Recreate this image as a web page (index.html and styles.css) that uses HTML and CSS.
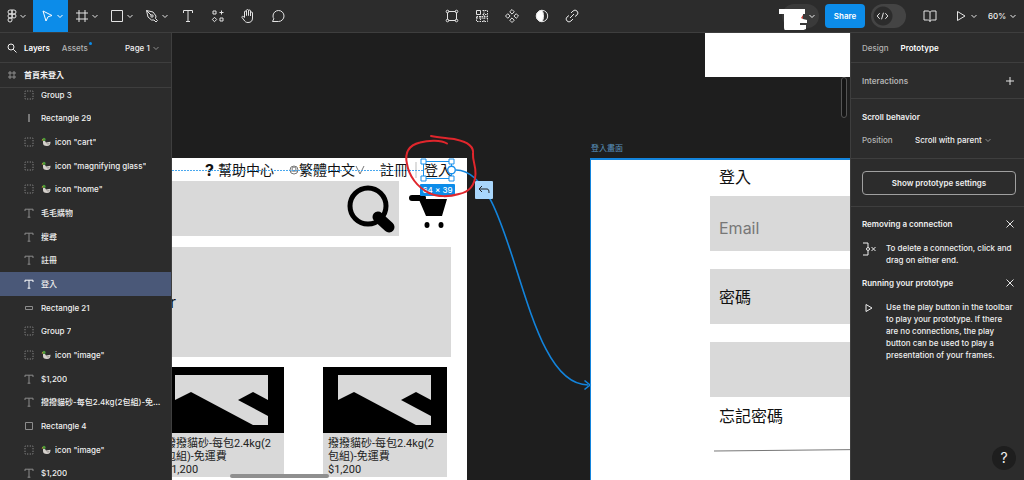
FILE: index.html
```
<!DOCTYPE html>
<html lang="zh-Hant">
<head>
<meta charset="utf-8">
<title>Design editor</title>
<link rel="stylesheet" href="styles.css">
</head>
<body>
<svg class="defs" aria-hidden="true">
  <symbol id="chev" viewBox="0 0 6 6"><path d="M.5 2L3 4.500 5.500 2"/></symbol>
  <symbol id="group" viewBox="0 0 10 10"><path d="M1 1h8v8H1z" stroke-dasharray="1.2 1.467" stroke-dashoffset=".6"/></symbol>
  <symbol id="text" viewBox="0 0 10 10"><path d="M1 3V1.2h8V3M5 1.2v8M3.6 9.2h2.8"/></symbol>
  <symbol id="hash" viewBox="0 0 10 10"><path d="M3 1v8M7 1v8M1 3h8M1 7h8"/></symbol>
  <symbol id="box" viewBox="0 0 10 10"><path d="M1.500 1.500h7v7h-7z"/></symbol>
  <symbol id="wide" viewBox="0 0 10 10"><path d="M1.500 3.500h7v3h-7z"/></symbol>
  <symbol id="bar" viewBox="0 0 10 10"><path d="M5 1v8" stroke-width="1.6"/></symbol>
  <symbol id="close" viewBox="0 0 10 10"><path d="M1.500 1.500l7 7M8.500 1.500l-7 7"/></symbol>
  <symbol id="duck" viewBox="0 0 10 10">
    <path d="M2 4h2l1 1.500 4.500-.7c0 3-1 4.200-3.500 4.200C3 9 2 8 2 6z" fill="#d5d1cc" stroke="none"/>
    <path d="M5 6.500l3.500-.6c0 1.300-1 1.700-2 1.700z" fill="#a29c98" stroke="none"/>
    <circle cx="3" cy="2.400" r="1.600" fill="#4c9a3a" stroke="none"/>
    <path d="M2 2L.4 3.200 2.200 3.500z" fill="#e0a33a" stroke="none"/>
  </symbol>
  <symbol id="picture" viewBox="0 0 124 66">
    <path d="M0 0h124v66H0z" fill="#000" stroke="none"/>
    <path d="M15 8h93v25l-15-8-15 8 30 16v9H93L31 25l-16 8z" fill="#d9d9d9" stroke="none"/>
  </symbol>
</svg>

<header class="toolbar">
  <div class="tools">
    <button class="tool menu" aria-label="Main menu"><svg class="i16" viewBox="0 0 16 16"><path d="M8 2H6a2 2 0 000 4h2zM8 2h2a2 2 0 010 4H8zM8 6H6a2 2 0 000 4h2zM8 10H6a2 2 0 102 2z"/><circle cx="10" cy="8" r="2"/></svg><svg class="chev"><use href="#chev"/></svg></button>
    <button class="tool wide active" aria-label="Move"><svg class="i16" viewBox="0 0 16 16"><path d="M4 3l9 4.500-4 1.300L7 13z"/></svg><svg class="chev"><use href="#chev"/></svg></button>
    <button class="tool wide" aria-label="Frame"><svg class="i16" viewBox="0 0 16 16"><path d="M5 2v12M11 2v12M2 5h12M2 11h12"/></svg><svg class="chev"><use href="#chev"/></svg></button>
    <button class="tool wide" aria-label="Rectangle"><svg class="i16" viewBox="0 0 16 16"><path d="M2.500 2.500h11v11h-11z"/></svg><svg class="chev"><use href="#chev"/></svg></button>
    <button class="tool wide" aria-label="Pen"><svg class="i16" viewBox="0 0 16 16"><path d="M2.500 2.500L9 4l3 4-.5 2.500 2 2-1.500 1.500-2-2L7.500 12 4 9zM2.500 2.500L7 7"/><circle cx="8" cy="8" r="1.200"/></svg><svg class="chev"><use href="#chev"/></svg></button>
    <button class="tool" aria-label="Text"><svg class="i16" viewBox="0 0 16 16"><path d="M3.500 5V2.500h9V5M8 2.500v11M6 13.500h4"/></svg></button>
    <button class="tool" aria-label="Resources"><svg class="i16" viewBox="0 0 16 16"><path d="M3 3h3v3H3zM11.500 2.500v4M9.500 4.500h4M4.500 9.300l2.200 2.200-2.200 2.200-2.200-2.200zM10 10h3v3h-3z"/></svg></button>
    <button class="tool" aria-label="Hand"><svg class="i16" viewBox="0 0 16 16"><path d="M4.500 9.500V4a1 1 0 012 0v3.500V2.500a1 1 0 012 0v5V3a1 1 0 012 0v5V5a1 1 0 012 0v5c0 3-1.500 4.500-4.500 4.500-2 0-3-.8-4-2.500L2 9.500c-.5-1 .8-1.700 1.500-.9z"/></svg></button>
    <button class="tool" aria-label="Comment"><svg class="i16" viewBox="0 0 16 16"><path d="M2.500 13.500h6a5.500 5.500 0 10-5.500-5.500c0 1 .3 2 .8 2.800z"/></svg></button>
  </div>
  <div class="tools">
    <button class="tool" aria-label="Edit object"><svg class="i16" viewBox="0 0 16 16"><path d="M3.500 4.500v7M12.500 4.500v7M4.500 3.500h7M4.500 12.500h7"/><circle cx="3.500" cy="3.500" r="1.300"/><circle cx="12.500" cy="3.500" r="1.300"/><circle cx="3.500" cy="12.500" r="1.300"/><circle cx="12.500" cy="12.500" r="1.300"/></svg></button>
    <button class="tool" aria-label="Tidy up"><svg class="i16" viewBox="0 0 16 16"><path d="M2.500 2.500h4v4h-4z"/><path d="M8.500 2.500h5v11h-11v-5M8.500 6.500h5M2.500 10h11M6.500 8v6M10 2v12M2.500 8.500h11" stroke-dasharray="1.500 1"/></svg></button>
    <button class="tool" aria-label="Create component"><svg class="i16" viewBox="0 0 16 16"><path d="M8 1.500l2.300 2.300L8 6.100 5.700 3.800zM8 9.900l2.300 2.300L8 14.500l-2.300-2.300zM3.800 5.700L6.100 8l-2.300 2.300L1.500 8zM12.200 5.700L14.500 8l-2.300 2.300L9.900 8z"/></svg></button>
    <button class="tool" aria-label="Mask"><svg class="i16" viewBox="0 0 16 16"><circle cx="8" cy="8" r="5.700"/><path d="M8 2.300a5.700 5.700 0 000 11.400c2-3 2-8.400 0-11.400z" fill="#fff"/></svg></button>
    <button class="tool" aria-label="Link"><svg class="i16" viewBox="0 0 16 16"><path d="M6 10l4-4M7 5l2-2a2.500 2.500 0 014 4l-2 1.500M9 11l-2 2a2.500 2.500 0 01-4-4l2-1.500"/></svg></button>
  </div>
  <div class="tools right">
    <button class="people" aria-label="Collaborators"><svg class="blot" viewBox="0 0 32 24"><path d="M1 3h26v5h-2v5l4 1v3h-7v2h6v4l-5 2H10c-4 0-4-2-4-5V8H1z" fill="#fff" stroke="none"/><path d="M23 12l2-3v4z" fill="#c8423a" stroke="none"/></svg><svg class="chev"><use href="#chev"/></svg></button>
    <button class="share">Share</button>
    <label class="toggle"><input type="checkbox" aria-label="Dev mode"><svg class="i16" viewBox="0 0 16 16"><path d="M5 5L2.300 8 5 11M11 5l2.700 3L11 11M9 4.500l-2 7"/></svg></label>
    <button class="tool book" aria-label="Library"><svg class="i16" viewBox="0 0 16 16"><path d="M8 4.500C7.500 3 6.500 3 5 3H2v9h3.500c1.500 0 2 .3 2.500 1.500.5-1.200 1-1.500 2.500-1.500H14V3h-3c-1.500 0-2.500 0-3 1.500zM8 4.500v9"/></svg></button>
    <button class="tool play" aria-label="Present"><svg class="i16" viewBox="0 0 16 16"><path d="M4.500 3.500L12 8l-7.500 4.500z"/></svg><svg class="chev"><use href="#chev"/></svg></button>
    <label class="pick"><select aria-label="Zoom"><option>60%</option></select><svg class="chev"><use href="#chev"/></svg></label>
  </div>
</header>

<main class="workspace">
  <aside class="layers">
    <div class="layers-head">
      <svg class="i10 bright" viewBox="0 0 10 10"><circle cx="4" cy="4" r="3"/><path d="M6.200 6.200L9.500 9.500"/></svg>
      <button class="tab on">Layers</button>
      <button class="tab assets">Assets</button>
      <label class="pick page"><select aria-label="Page"><option>Page 1</option></select><svg class="chev dim"><use href="#chev"/></svg></label>
    </div>
    <div class="layer-top"><svg class="i10"><use href="#hash"/></svg><span>首頁未登入</span></div>
    <ul class="list">
      <li><svg class="i10"><use href="#group"/></svg><span>Group 3</span></li>
      <li><svg class="i10"><use href="#bar"/></svg><span>Rectangle 29</span></li>
      <li><svg class="i10"><use href="#group"/></svg><svg class="duck"><use href="#duck"/></svg><span>icon "cart"</span></li>
      <li><svg class="i10"><use href="#group"/></svg><svg class="duck"><use href="#duck"/></svg><span>icon "magnifying glass"</span></li>
      <li><svg class="i10"><use href="#group"/></svg><svg class="duck"><use href="#duck"/></svg><span>icon "home"</span></li>
      <li><svg class="i10"><use href="#text"/></svg><span>毛毛購物</span></li>
      <li><svg class="i10"><use href="#text"/></svg><span>搜尋</span></li>
      <li><svg class="i10"><use href="#text"/></svg><span>註冊</span></li>
      <li class="selected"><svg class="i10"><use href="#text"/></svg><span>登入</span></li>
      <li><svg class="i10"><use href="#wide"/></svg><span>Rectangle 21</span></li>
      <li><svg class="i10"><use href="#group"/></svg><span>Group 7</span></li>
      <li><svg class="i10"><use href="#group"/></svg><svg class="duck"><use href="#duck"/></svg><span>icon "image"</span></li>
      <li><svg class="i10"><use href="#text"/></svg><span>$1,200</span></li>
      <li><svg class="i10"><use href="#text"/></svg><span>撥撥貓砂-每包2.4kg(2包組)-免運費</span></li>
      <li><svg class="i10"><use href="#box"/></svg><span>Rectangle 4</span></li>
      <li><svg class="i10"><use href="#group"/></svg><svg class="duck"><use href="#duck"/></svg><span>icon "image"</span></li>
      <li><svg class="i10"><use href="#text"/></svg><span>$1,200</span></li>
    </ul>
  </aside>

  <section class="canvas">
    <div class="frame blank"></div>

    <div class="frame home">
      <div class="home-nav">
        <b class="q">?</b><span>幫助中心</span>
        <span class="lang"><svg class="globe" viewBox="0 0 10 10"><circle cx="5" cy="5" r="4"/><circle cx="5" cy="4" r="2"/><path d="M1 6h8"/></svg>繁體中文<svg class="vee" viewBox="0 0 10 10"><path d="M1 1l4 8 4-8"/></svg></span>
        <span class="join">註冊</span><i class="rule"></i><span>登入</span>
      </div>
      <div class="home-search">
        <div class="field"><svg class="magnifier" viewBox="0 0 48 48"><path d="M31 32l11 10" stroke="#000" stroke-width="11" stroke-linecap="round"/><circle cx="21" cy="21" r="18" stroke="#000" stroke-width="5"/></svg></div>
        <svg class="cart" viewBox="0 0 38 40"><path d="M3 7h11" stroke="#000" stroke-width="6" stroke-linecap="round"/><path d="M8 4l4 1 1 3h25l-5 17H17z" fill="#000" stroke="none"/><ellipse cx="18" cy="34" rx="2.500" ry="3" fill="#000" stroke="none"/><ellipse cx="32" cy="34" rx="2.500" ry="3" fill="#000" stroke="none"/></svg>
      </div>
      <div class="banner">r</div>
      <div class="cards">
        <article class="card"><svg class="photo"><use href="#picture"/></svg><p>撥撥貓砂-每包2.4kg(2<br>包組)-免運費<br>$1,200</p></article>
        <article class="card"><svg class="photo"><use href="#picture"/></svg><p>撥撥貓砂-每包2.4kg(2<br>包組)-免運費<br>$1,200</p></article>
      </div>
    </div>

    <span class="frame-label">登入畫面</span>
    <div class="frame login">
      <div class="login-title">登入</div>
      <div class="login-box faint">Email</div>
      <div class="login-box">密碼</div>
      <div class="login-box"></div>
      <div class="forgot">忘記密碼</div>
      <svg class="slant" viewBox="0 0 200 4" preserveAspectRatio="none"><path d="M0 3L200 1"/></svg>
    </div>

    <svg class="overlay" viewBox="0 0 678 447">
      <g transform="translate(-172 -33)">
        <path d="M172 170.500H423" stroke="#4aa8ee" stroke-dasharray="2 1"/>
        <path d="M423.500 161.500h28v17h-28z" stroke="#1890ec"/>
        <path d="M456 170C516 170 520 385 588 385" stroke="#1384dc" stroke-width="1.600"/>
        <path d="M584.500 380.500l5.500 4.500-5.500 4.500" stroke="#1384dc" stroke-width="1.600"/>
        <g fill="#fff" stroke="#1890ec"><path d="M421 159h5v5h-5zM449 159h5v5h-5zM421 176h5v5h-5zM449 176h5v5h-5z"/><circle cx="451.500" cy="170" r="3.800" stroke-width="1.400"/></g>
      </g>
    </svg>
    <span class="size">64 × 39</span>
    <button class="back" aria-label="Back"><svg class="i12" viewBox="0 0 12 12"><path d="M4 2L1 5l3 3M1 5h8c1.500 0 2 1 2 4"/></svg></button>
    <svg class="overlay" viewBox="0 0 678 447">
      <path transform="translate(-172 -33)" d="M431 136C440 138 449 138 456 139.500C468 142 474 147 473 154C472.500 161 476 166 475.500 174C475 185 469 192 459 194C449 197 437 197 429 193C417 187 409 176 407 164C404 151 410 145 420 142.500C429 140 441 140 447 143.500" stroke="#e0262c" stroke-width="2" stroke-linecap="round"/>
    </svg>
    <i class="scroll-v"></i>
    <i class="scroll-h"></i>
  </section>

  <aside class="inspector">
    <div class="tabs"><button class="tab">Design</button><button class="tab on">Prototype</button></div>
    <section class="block interactions"><h2 class="muted">Interactions</h2><button class="icon" aria-label="Add interaction"><svg class="i10" viewBox="0 0 10 10"><path d="M5 1v8M1 5h8"/></svg></button></section>
    <section class="block scroll"><h2>Scroll behavior</h2>
      <div class="prop"><label for="pos">Position</label><span class="pick"><select id="pos"><option>Scroll with parent</option></select><svg class="chev dim"><use href="#chev"/></svg></span></div>
    </section>
    <section class="block"><button class="settings">Show prototype settings</button></section>
    <section class="tips">
      <div class="tip-head"><h2>Removing a connection</h2><button class="icon" aria-label="Close"><svg class="i10"><use href="#close"/></svg></button></div>
      <div class="tip"><svg class="i14" viewBox="0 0 14 14"><path d="M1 1h5v4M1 13h5V9"/><circle cx="6" cy="7" r="1.500"/><path d="M9.500 5l4 4M13.500 5l-4 4"/></svg><p>To delete a connection, click and drag on either end.</p></div>
      <div class="tip-head"><h2>Running your prototype</h2><button class="icon" aria-label="Close"><svg class="i10"><use href="#close"/></svg></button></div>
      <div class="tip"><svg class="i14" viewBox="0 0 14 14"><path d="M4 3.500l6 3.500-6 3.500z"/></svg><p>Use the play button in the toolbar to play your prototype. If there are no connections, the play button can be used to play a presentation of your frames.</p></div>
    </section>
    <button class="help" aria-label="Help">?</button>
  </aside>
</main>
</body>
</html>
```

FILE: styles.css
```
* { box-sizing: border-box; }
body {
  margin: 0;
  height: 100vh;
  display: flex;
  flex-direction: column;
  overflow: hidden;
  background: #1e1e1e;
  color: #f0f0f0;
  font: 500 8px/12px Inter, "Noto Sans CJK TC", sans-serif;
}
button, select {
  appearance: none;
  margin: 0;
  padding: 0;
  border: 0;
  background: none;
  color: inherit;
  font: inherit;
}
h2, p, ul { margin: 0; padding: 0; }
h2 { font-size: 8px; font-weight: 600; line-height: 12px; }
svg { display: block; flex: none; fill: none; stroke: currentColor; }
.defs { position: absolute; width: 0; height: 0; }
.i10 { width: 10px; height: 10px; }
.i12 { width: 12px; height: 12px; }
.i14 { width: 14px; height: 14px; }
.i16 { width: 16px; height: 16px; }
.chev { width: 6px; height: 6px; }
.dim { color: #8c8c8c; }
.bright { color: #f0f0f0; }
.pick { display: flex; align-items: center; gap: 3px; }

/* Toolbar */
.toolbar {
  flex: none;
  display: grid;
  grid-template-columns: 1fr auto 1fr;
  height: 33px;
  background: #2c2c2c;
  border-bottom: 1px solid #3e3e3e;
}
.tools { display: flex; align-items: center; }
.right { justify-content: flex-end; padding-right: 8px; }
.tool {
  width: 30px;
  height: 32px;
  display: flex;
  align-items: center;
  justify-content: center;
  gap: 2px;
  color: #e4e4e4;
}
.menu { width: 33px; padding-right: 4px; gap: 0; }
.wide { width: 35px; }
.active { background: #0c8ce9; color: #fff; }
.people {
  position: relative;
  width: 37px;
  height: 24px;
  margin-right: 6px;
  padding-right: 4px;
  display: flex;
  align-items: center;
  justify-content: flex-end;
  border-radius: 12px;
  background: #3a3a3a;
}
.blot { position: absolute; left: -4px; top: 2px; width: 32px; height: 24px; }
.share {
  width: 40px;
  height: 24px;
  margin-right: 6px;
  border-radius: 4px;
  background: #0c8ce9;
  color: #fff;
  font-weight: 600;
}
.toggle { display: grid; align-items: center; width: 35px; height: 24px; }
.toggle > * { grid-area: 1 / 1; }
.toggle input {
  appearance: none;
  margin: 0;
  width: 35px;
  height: 24px;
  border-radius: 12px;
  background: radial-gradient(circle at 12px 12px, #2c2c2c 9px, #444 10px);
}
.toggle svg { margin-left: 4px; width: 15px; pointer-events: none; }
.book { margin-left: 9px; }
.play { width: 38px; margin: 0 4px 0 1px; }

/* Layers panel */
.workspace { flex: 1; min-height: 0; display: flex; }
.layers {
  flex: none;
  width: 172px;
  display: flex;
  flex-direction: column;
  overflow: hidden;
  background: #2c2c2c;
  border-right: 1px solid #3e3e3e;
}
.layers-head {
  flex: none;
  height: 30px;
  display: flex;
  align-items: center;
  padding: 0 12px 0 7px;
  border-bottom: 1px solid #3e3e3e;
}
.tab { color: #b3b3b3; }
.on { color: #fff; font-weight: 600; }
.layers-head .on { margin: 0 12px 0 7px; }
.assets { position: relative; }
.assets::after {
  content: "";
  position: absolute;
  right: -4px;
  top: 0;
  width: 3px;
  height: 3px;
  border-radius: 50%;
  background: #0c8ce9;
}
.page { margin-left: auto; }
.layer-top {
  flex: none;
  height: 25px;
  display: flex;
  align-items: center;
  gap: 7px;
  padding-left: 7px;
  border-bottom: 1px solid #3e3e3e;
  font-weight: 600;
}
.layer-top svg { color: #8c8c8c; }
.list {
  flex: none;
  min-height: 402px;
  margin-top: -5px;
  display: grid;
  grid-auto-rows: 1fr;
  list-style: none;
}
.list li {
  display: flex;
  align-items: center;
  min-width: 0;
  padding: 0 9px 0 24px;
}
.list li > .i10 { margin-right: 7px; color: #8c8c8c; }
.list span { overflow: hidden; white-space: nowrap; text-overflow: ellipsis; }
.duck { width: 10px; height: 10px; margin-right: 4px; }
.list .selected { background: #4a5878; }
.list .selected > .i10 { color: #fff; }

/* Canvas */
.canvas {
  position: relative;
  flex: 1;
  min-width: 0;
  overflow: hidden;
  font-weight: 400;
}
.frame { position: absolute; background: #fff; color: #111; }
.blank { left: 533px; top: 0; width: 240px; height: 44px; }
.home { left: -12px; top: 125px; width: 307px; height: 340px; }
.home-nav {
  display: flex;
  align-items: center;
  height: 23px;
  padding-left: 41px;
  font-size: 14px;
  line-height: 20px;
  white-space: nowrap;
}
.q { width: 17px; text-align: center; font-weight: 700; font-size: 16px; }
.lang { display: flex; align-items: center; margin-left: 15px; }
.globe { width: 10px; height: 10px; color: #777; }
.vee { width: 10px; height: 10px; color: #777; }
.join { margin-left: 15px; }
.rule { width: 2px; height: 16px; margin: 0 7px; background: #ddd; }
.home-search { display: flex; align-items: center; gap: 10px; height: 55px; }
.field {
  display: flex;
  align-items: center;
  justify-content: flex-end;
  width: 239px;
  height: 55px;
  padding-right: 4px;
  background: #d9d9d9;
}
.magnifier { width: 48px; height: 48px; }
.cart { width: 38px; height: 40px; margin-top: 5px; }
.banner {
  display: flex;
  align-items: center;
  width: 291px;
  height: 110px;
  margin-top: 11px;
  padding-left: 10px;
  background: #d9d9d9;
  font-size: 16px;
}
.cards { display: grid; grid-template-columns: 124px 124px; gap: 39px; margin-top: 10px; }
.card {
  background: #d9d9d9;
  color: #222;
  font: 11px/13px Roboto, "Noto Sans CJK TC", sans-serif;
}
.card p { padding: 4px 0 1px 5px; white-space: nowrap; }
.photo { width: 124px; height: 66px; }
.frame-label { position: absolute; left: 419px; top: 109px; color: #5a93bd; }
.login {
  left: 418px;
  top: 125px;
  width: 320px;
  height: 340px;
  border: solid #1384dc;
  border-width: 2px 0 0 1px;
  font-size: 16px;
  line-height: 24px;
}
.login-title { padding: 5px 0 7px 128px; }
.login-box {
  display: flex;
  align-items: center;
  height: 55px;
  margin: 0 0 18px 119px;
  padding: 0 0 0 9px;
  background: #d9d9d9;
}
.faint { padding-top: 8px; color: #777; }
.forgot { padding-left: 128px; margin-top: -11px; }
.slant { width: 200px; height: 4px; margin: 20px 0 0 123px; color: #777; }
.overlay { position: absolute; left: 0; top: 0; width: 678px; height: 447px; pointer-events: none; }
.size {
  position: absolute;
  left: 248px;
  top: 151px;
  width: 35px;
  border-radius: 1px;
  background: #0c8ce9;
  color: #fff;
  font-weight: 500;
  text-align: center;
}
.back {
  position: absolute;
  left: 303px;
  top: 148px;
  width: 18px;
  height: 18px;
  display: grid;
  place-items: center;
  border-radius: 1px;
  background: #a9d6fb;
  color: #222;
}
.scroll-v {
  position: absolute;
  right: 3px;
  top: 44px;
  width: 6px;
  height: 41px;
  border: 1px solid #555;
  border-radius: 3px;
  background: #151515;
}
.scroll-h {
  position: absolute;
  left: 58px;
  bottom: 2px;
  width: 99px;
  height: 4px;
  border-radius: 2px;
  background: #8f8f8f;
}

/* Inspector */
.inspector {
  position: relative;
  flex: none;
  width: 174px;
  background: #2c2c2c;
  border-left: 1px solid #3e3e3e;
}
.tabs {
  height: 30px;
  display: flex;
  align-items: center;
  gap: 12px;
  padding-left: 11px;
  border-bottom: 1px solid #3e3e3e;
}
.block { padding: 12px 8px 11px 11px; border-bottom: 1px solid #3e3e3e; }
.interactions { display: flex; align-items: center; justify-content: space-between; padding-right: 9px; }
.muted { color: #b3b3b3; }
.icon { display: flex; color: #e4e4e4; }
.prop { display: grid; grid-template-columns: 53px 1fr; margin-top: 11px; }
.prop label { color: #b3b3b3; }
.settings {
  display: block;
  width: 100%;
  height: 24px;
  border: 1px solid #a0a0a0;
  border-radius: 4px;
  font-weight: 600;
}
.tips { padding: 11px 9px 0 11px; }
.tip-head { display: flex; align-items: center; justify-content: space-between; }
.tip { display: flex; gap: 10px; margin: 12px 0 11px; }
.tip p { flex: 1; }
.scroll { padding-bottom: 12px; }
.help {
  position: absolute;
  right: 8px;
  bottom: 10px;
  width: 24px;
  height: 24px;
  border-radius: 50%;
  background: #1e1e1e;
  font-size: 14px;
  font-weight: 400;
}
```
